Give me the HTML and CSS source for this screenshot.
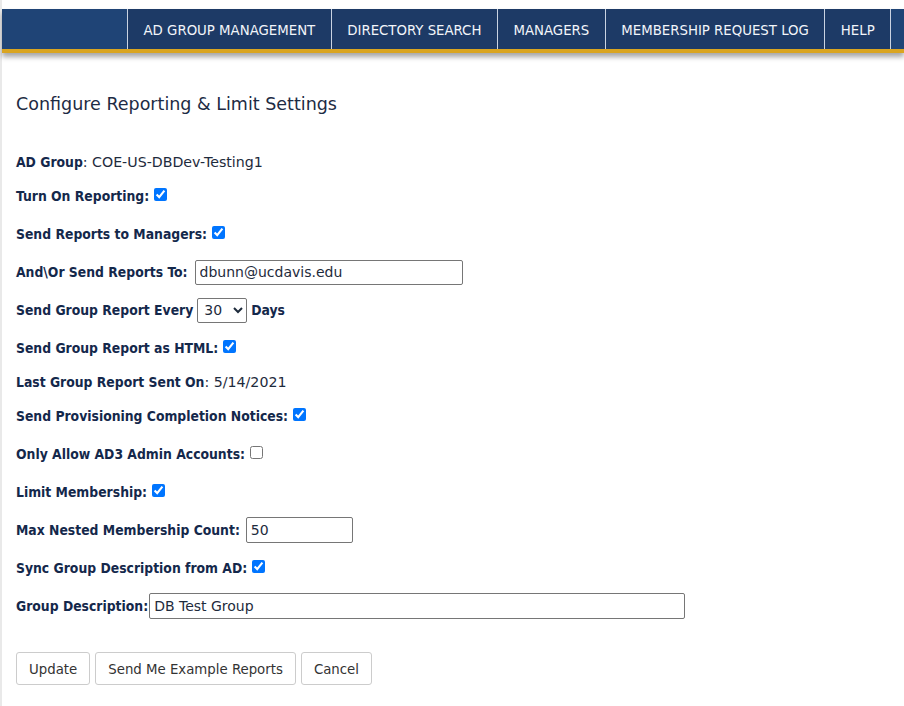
FILE: index.html
```html
<!DOCTYPE html>
<html lang="en">
<head>
<meta charset="utf-8">
<title>Configure Reporting &amp; Limit Settings</title>
<link rel="stylesheet" href="styles.css">
</head>
<body>
<div class="page">
  <nav class="topnav">
    <div class="nav-brand"></div>
    <a class="nav-item" href="#">AD GROUP MANAGEMENT</a>
    <a class="nav-item" href="#">DIRECTORY SEARCH</a>
    <a class="nav-item" href="#">MANAGERS</a>
    <a class="nav-item" href="#">MEMBERSHIP REQUEST LOG</a>
    <a class="nav-item" href="#">HELP</a>
    <div class="nav-fill"></div>
  </nav>

  <main class="content">
    <h1 class="title">Configure Reporting &amp; Limit Settings</h1>

    <form class="settings">
      <div class="row row-text"><b>AD Group</b><span class="value">:&nbsp;COE-US-DBDev-Testing1</span></div>
      <div class="row"><b>Turn On Reporting:</b><input type="checkbox" checked></div>
      <div class="row"><b>Send Reports to Managers:</b><input type="checkbox" checked></div>
      <div class="row"><b>And\Or Send Reports To:</b><input class="field field-email" type="text" value="dbunn@ucdavis.edu"></div>
      <div class="row"><b>Send Group Report Every</b><select class="field field-select"><option>30</option><option>60</option><option>90</option></select><b>Days</b></div>
      <div class="row"><b>Send Group Report as HTML:</b><input type="checkbox" checked></div>
      <div class="row row-text"><b>Last Group Report Sent On</b><span class="value">:&nbsp;5/14/2021</span></div>
      <div class="row"><b>Send Provisioning Completion Notices:</b><input type="checkbox" checked></div>
      <div class="row"><b>Only Allow AD3 Admin Accounts:</b><input type="checkbox"></div>
      <div class="row"><b>Limit Membership:</b><input type="checkbox" checked></div>
      <div class="row"><b>Max Nested Membership Count:</b><input class="field field-count" type="text" value="50"></div>
      <div class="row"><b>Sync Group Description from AD:</b><input type="checkbox" checked></div>
      <div class="row row-tight"><b>Group Description:</b><input class="field field-desc" type="text" value="DB Test Group"></div>

      <div class="actions">
        <button type="button" class="btn">Update</button>
        <button type="button" class="btn">Send Me Example Reports</button>
        <button type="button" class="btn">Cancel</button>
      </div>
    </form>
  </main>
</div>
</body>
</html>
```
FILE: styles.css
```css
html, body {
  margin: 0;
  padding: 0;
  background: #ffffff;
}

body {
  font-family: "DejaVu Sans Condensed", "DejaVu Sans", sans-serif;
  color: #14284b;
  font-size: 13.8px;
}

.page {
  border-left: 2px solid #e9e9e9;
  min-height: 706px;
  box-sizing: border-box;
  padding-top: 9px;
}

.topnav {
  display: flex;
  height: 40px;
  background: #1d3a66;
  border-bottom: 4px solid #daa520;
  box-shadow: 0 4px 5px rgba(0, 0, 0, 0.35);
}

.nav-brand {
  width: 125px;
  background: #1f4476;
  border-right: 1px solid #c9d3e2;
}

.nav-item {
  display: flex;
  align-items: center;
  padding: 0 15.5px;
  color: #f2f5fa;
  text-decoration: none;
  font-size: 14.8px;
  border-right: 1px solid #c9d3e2;
}

.nav-fill {
  flex: 1;
  background: #1f4476;
}

.content {
  padding: 0 14px;
}

.title {
  margin: 39px 0 36px;
  font-family: "DejaVu Sans", sans-serif;
  font-size: 17.5px;
  line-height: 24px;
  font-weight: normal;
  color: #1d2b44;
}

.settings {
  display: flex;
  flex-direction: column;
  gap: 10px;
}

.row {
  display: flex;
  align-items: center;
  height: 28px;
  gap: 4px;
  white-space: nowrap;
}

.row-text {
  height: 20px;
  gap: 0;
}

.row-tight {
  gap: 1px;
}

.row b {
  font-weight: bold;
}

.value {
  font-family: "DejaVu Sans", sans-serif;
  font-size: 14.2px;
  color: #1e2b3c;
}

input[type="checkbox"] {
  width: 13px;
  height: 13px;
  margin: 0 0 4px 1px;
  accent-color: #0075ff;
}

.field {
  font-family: "DejaVu Sans", sans-serif;
  font-size: 14px;
  color: #1e2b3c;
  border: 1px solid #767676;
  border-radius: 2px;
  height: 25px;
  box-sizing: border-box;
  padding: 1px 4px;
  background: #fff;
}

.field-email {
  width: 268px;
  margin-left: 3px;
}

.field-select {
  width: 50px;
  padding: 0 0 0 2px;
}

.field-count {
  width: 107px;
  height: 26px;
  margin-left: 2px;
}

.field-desc {
  width: 536px;
  height: 26px;
}

.actions {
  display: flex;
  gap: 5px;
  margin-top: 22px;
}

.btn {
  height: 33px;
  padding: 0 12px;
  background: #fff;
  border: 1px solid #cccccc;
  border-radius: 3px;
  color: #333333;
  font-family: "DejaVu Sans Condensed", "DejaVu Sans", sans-serif;
  font-size: 14.8px;
}
```
